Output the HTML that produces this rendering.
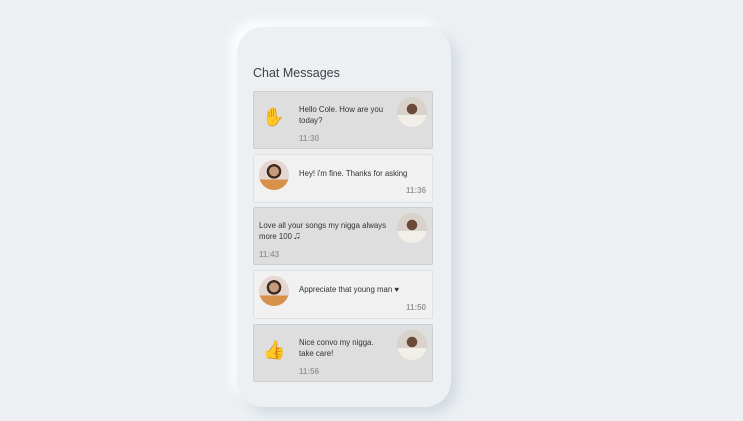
<!DOCTYPE html>
<html><head><style>
body{margin:0;width:743px;height:421px;background:#ecf0f3;font-family:"Liberation Sans",sans-serif;position:relative;overflow:hidden}
.phone{position:absolute;left:237px;top:27px;width:214px;height:380px;background:#ecf0f3;border-radius:26px;box-shadow:6px 6px 12px #d1d9e0,-6px -6px 12px #ffffff}
h1{position:absolute;left:253px;top:66px;margin:0;font-size:12.5px;font-weight:normal;color:#3c4048}
.c{position:absolute;left:253px;width:178px;border:1px solid #cfcfcf;border-radius:2px}
.d{background:#dedede}.l{background:#f1f1f1;border-color:#e0e0e0}
.t{position:absolute;font-size:7.8px;color:#333;line-height:11px}
.tm{position:absolute;font-size:8px;color:#999;font-weight:bold}
.av{position:absolute;width:30px;height:30px;border-radius:50%}
.m{background:radial-gradient(circle at 50% 40%,#6b4a3a 0 22%,transparent 23%),linear-gradient(#d9d2cb 0 60%,#f2efe9 60%);}
.f{background:radial-gradient(circle at 50% 38%,#c79a7c 0 20%,#3a2a20 21% 30%,transparent 31%),linear-gradient(#e4d6d0 0 65%,#d8914a 65%);}
.e{position:absolute;font-size:18px;font-family:"DejaVu Sans",sans-serif;color:#f5c33b}
</style></head><body>
<div class="phone"></div>
<h1>Chat Messages</h1>
<div class="c d" style="top:91px;height:56px"></div>
<div class="e" style="left:262px;top:107px">✋</div>
<div class="t" style="left:299px;top:104px">Hello Cole. How are you<br>today?</div>
<div class="tm" style="left:299px;top:134px">11:30</div>
<div class="av m" style="left:397px;top:97px"></div>

<div class="c l" style="top:154px;height:47px"></div>
<div class="av f" style="left:259px;top:160px"></div>
<div class="t" style="left:299px;top:168px">Hey! i'm fine. Thanks for asking</div>
<div class="tm" style="left:406px;top:186px">11:36</div>

<div class="c d" style="top:207px;height:56px"></div>
<div class="t" style="left:259px;top:220px">Love all your songs my nigga always<br>more 100 🎜</div>
<div class="tm" style="left:259px;top:250px">11:43</div>
<div class="av m" style="left:397px;top:213px"></div>

<div class="c l" style="top:270px;height:47px"></div>
<div class="av f" style="left:259px;top:276px"></div>
<div class="t" style="left:299px;top:284px">Appreciate that young man ♥</div>
<div class="tm" style="left:406px;top:303px">11:50</div>

<div class="c d" style="top:324px;height:56px"></div>
<div class="e" style="left:263px;top:340px">👍</div>
<div class="t" style="left:299px;top:337px">Nice convo my nigga.<br>take care!</div>
<div class="tm" style="left:299px;top:367px">11:56</div>
<div class="av m" style="left:397px;top:330px"></div>
</body></html>
